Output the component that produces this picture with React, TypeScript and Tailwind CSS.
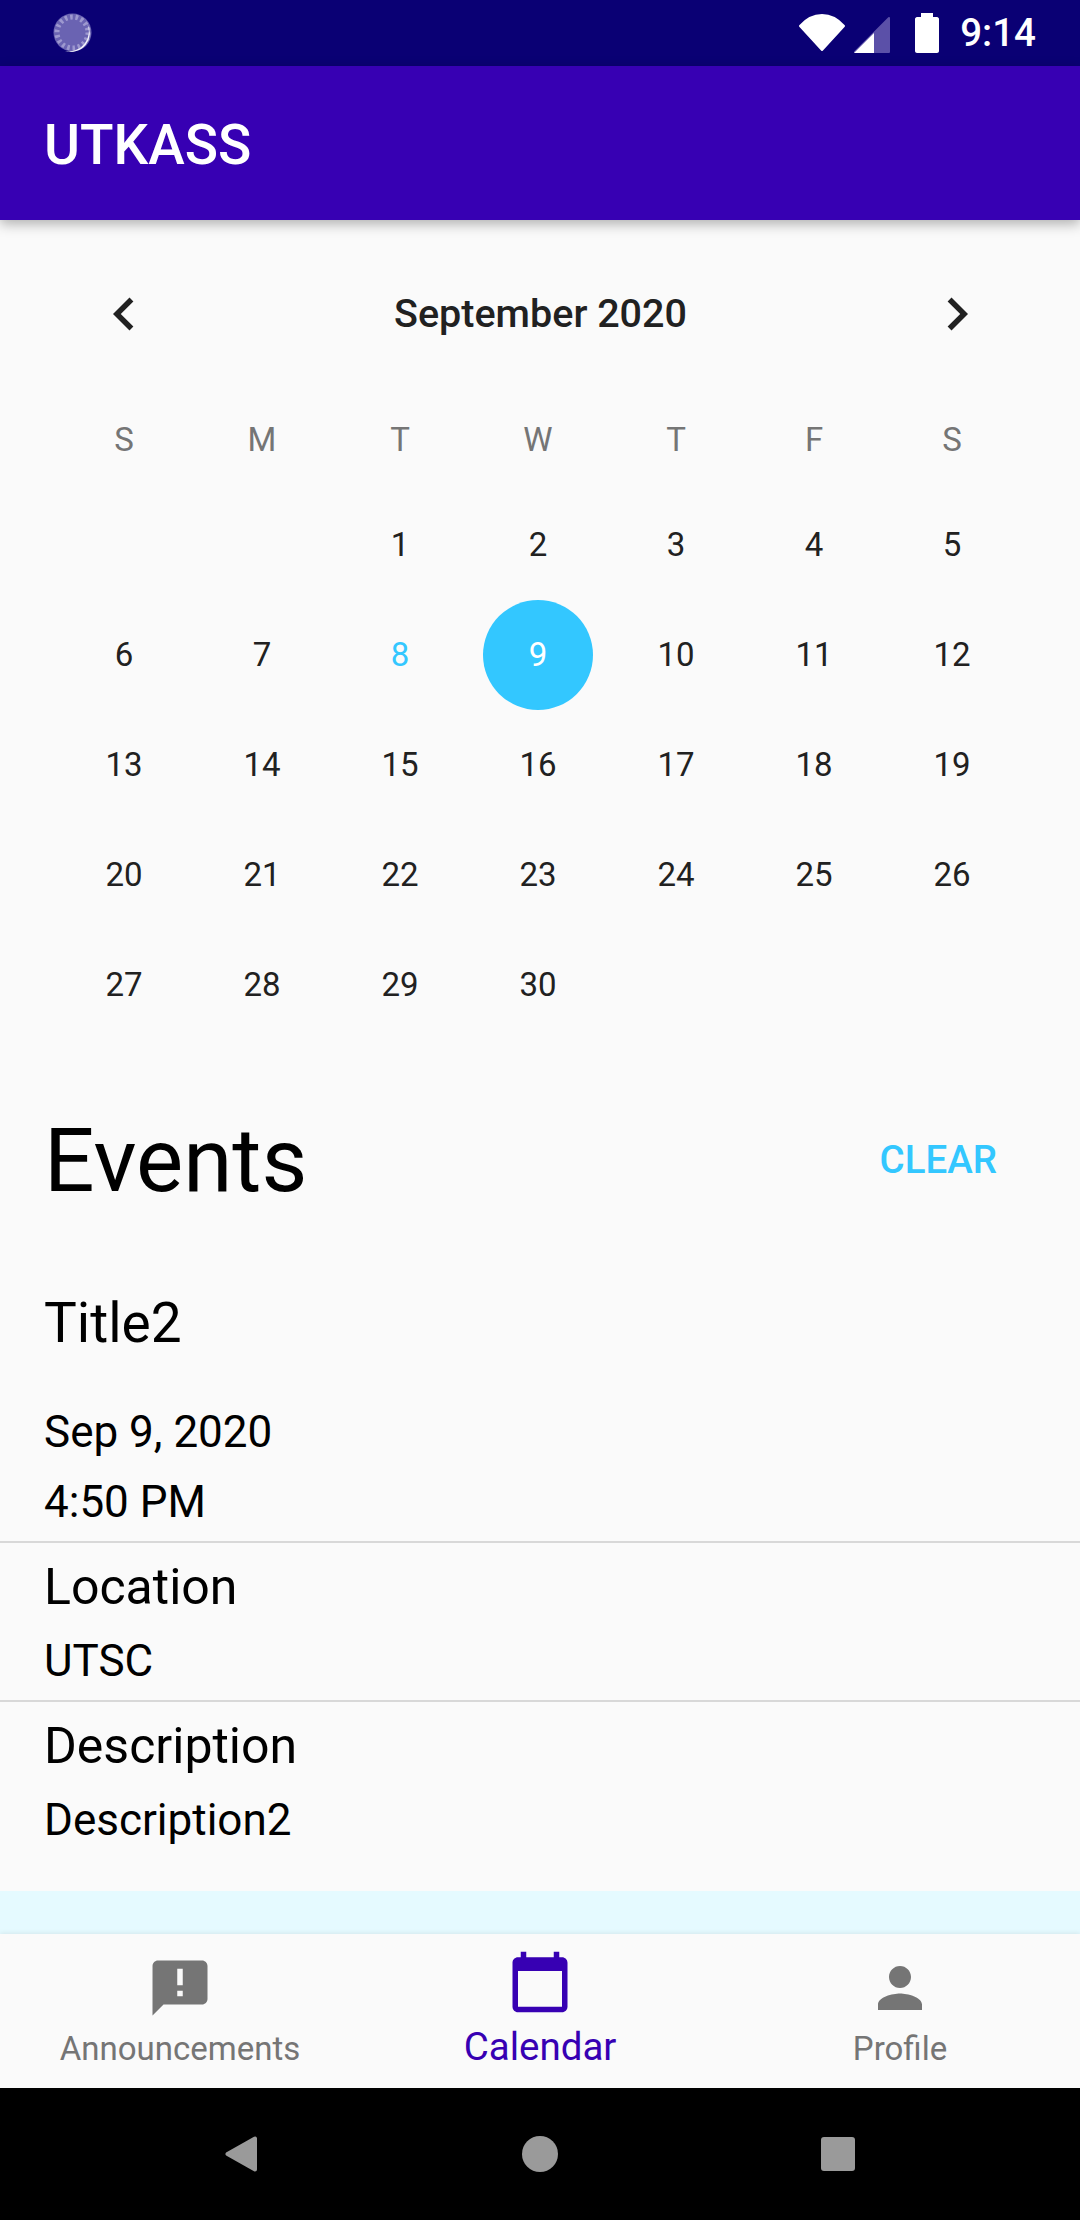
const purple = "#3700b3";

const weekdays = ["S", "M", "T", "W", "T", "F", "S"];
const days: (number | null)[] = [
  null, null, 1, 2, 3, 4, 5,
  6, 7, 8, 9, 10, 11, 12,
  13, 14, 15, 16, 17, 18, 19,
  20, 21, 22, 23, 24, 25, 26,
  27, 28, 29, 30, null, null, null,
];

function Icon({ d, className }: { d: string; className: string }) {
  return (
    <svg viewBox="0 0 24 24" className={className} fill="currentColor">
      <path d={d} />
    </svg>
  );
}

function StatusBar() {
  return (
    <div className="h-[66px] bg-[#0a0074] flex items-center pl-[53px] pr-[44px] text-white">
      <svg viewBox="0 0 40 40" className="w-[40px] h-[40px]">
        <circle cx="19.5" cy="19.5" r="19" fill="#6a63b2" />
        <circle cx="19.5" cy="19.5" r="15.5" fill="none" stroke="#9d98cf" strokeWidth="5" strokeDasharray="2.6 2.8" />
        <path d="M34 10 A20 20 0 0 1 12 38 A19 19 0 0 0 34 10 Z" fill="#f2f2fa" />
      </svg>
      <div className="flex-1" />
      <svg viewBox="0 0 48 38" className="w-[48px] h-[38px]" fill="white" stroke="white" strokeWidth="2" strokeLinejoin="round">
        <path d="M24 36 L2 12 C8 5 15 1 24 1 C33 1 40 5 46 12 Z" />
      </svg>
      <svg viewBox="0 0 38 38" className="w-[38px] h-[38px] ml-[7px] mt-[3px]" strokeLinejoin="round">
        <path d="M36 2 V36 H2 Z" fill="#5b50a8" stroke="#5b50a8" strokeWidth="2" />
        <path d="M21 17 V37 H1 Z" fill="#ffffff" />
      </svg>
      <svg viewBox="0 0 24 40" className="w-[24px] h-[40px] ml-[24px]" fill="currentColor">
        <path d="M6 0 H18 V4 H22 C23 4 24 5 24 6 V38 C24 39 23 40 22 40 H2 C1 40 0 39 0 38 V6 C0 5 1 4 2 4 H6 Z" />
      </svg>
      <span className="ml-[21px] text-[38.5px] leading-none font-medium">9:14</span>
    </div>
  );
}

function CalendarView() {
  return (
    <div className="pt-[38px] pl-[55px] pr-[59px]">
      <div className="h-[110px] flex items-center justify-between pl-[36px] pr-[31px] pt-[2px] text-[#212121]">
        <Icon className="w-[66px] h-[66px]" d="M15.41 7.41 14 6l-6 6 6 6 1.41-1.41L10.83 12z" />
        <span className="text-[39.5px] font-medium">September 2020</span>
        <Icon className="w-[66px] h-[66px]" d="M10 6 8.59 7.41 13.17 12l-4.58 4.59L10 18l6-6z" />
      </div>
      <div className="grid grid-cols-7 mt-[28px] h-[88px] items-center text-center text-[33px] text-[#757575]">
        {weekdays.map((day, i) => (
          <span key={i}>{day}</span>
        ))}
      </div>
      <div className="grid grid-cols-7 mt-[6px] auto-rows-[110px] text-[33px] text-[#212121]">
        {days.map((day, i) => (
          <div key={i} className="flex items-center justify-center">
            {day === 9 ? (
              <span className="w-[110px] h-[110px] rounded-full bg-[#33c7ff] text-white flex items-center justify-center">{day}</span>
            ) : (
              <span className={day === 8 ? "text-[#33c7ff]" : ""}>{day}</span>
            )}
          </div>
        ))}
      </div>
    </div>
  );
}

function EventDetails() {
  return (
    <div className="text-black">
      <div className="flex items-center justify-between h-[120px] mt-[60px] pl-[44px] pr-[83px]">
        <span className="text-[89px] leading-none">Events</span>
        <span className="text-[38.5px] font-medium text-[#33c7ff]">CLEAR</span>
      </div>
      <div className="pl-[44px] text-[44px]">
        <div className="text-[55px] leading-[60px] mt-[73px]">Title2</div>
        <div className="leading-[70px] mt-[44px]">Sep 9, 2020</div>
        <div className="leading-[70px]">4:50 PM</div>
      </div>
      <div className="h-[2px] bg-[#d8d8d8] mt-[4px]" />
      <div className="pl-[44px]">
        <div className="text-[50px] leading-[60px] mt-[14px]">Location</div>
        <div className="text-[44px] leading-[60px] mt-[14px]">UTSC</div>
      </div>
      <div className="h-[2px] bg-[#d8d8d8] mt-[9px]" />
      <div className="pl-[44px]">
        <div className="text-[50px] leading-[60px] mt-[14px]">Description</div>
        <div className="text-[44px] leading-[60px] mt-[14px]">Description2</div>
      </div>
    </div>
  );
}

function BottomTabs() {
  return (
    <div className="h-[154px] bg-[#fafafa] grid grid-cols-3 shadow-[0_-1px_5px_rgba(0,0,0,0.08)]">
      <div className="flex flex-col items-center pt-[21px] text-[#757575]">
        <Icon className="w-[66px] h-[66px]" d="M20 2H4c-1.1 0-1.99.9-1.99 2L2 22l4-4h14c1.1 0 2-.9 2-2V4c0-1.1-.9-2-2-2zm-7 9h-2V5h2v6zm0 4h-2v-2h2v2z" />
        <span className="text-[33px] leading-[40px] mt-[8px]">Announcements</span>
      </div>
      <div className="flex flex-col items-center pt-[15px] text-[#3700b3]">
        <Icon className="w-[66px] h-[66px]" d="M20 3h-1V1h-2v2H7V1H5v2H4c-1.1 0-2 .9-2 2v16c0 1.1.9 2 2 2h16c1.1 0 2-.9 2-2V5c0-1.1-.9-2-2-2zm0 18H4V8h16v13z" />
        <span className="text-[38.5px] leading-[44px] mt-[10px]">Calendar</span>
      </div>
      <div className="flex flex-col items-center pt-[21px] text-[#757575]">
        <Icon className="w-[66px] h-[66px]" d="M12 12c2.21 0 4-1.79 4-4s-1.79-4-4-4-4 1.79-4 4 1.79 4 4 4zm0 2c-2.67 0-8 1.34-8 4v2h16v-2c0-2.66-5.33-4-8-4z" />
        <span className="text-[33px] leading-[40px] mt-[8px]">Profile</span>
      </div>
    </div>
  );
}

function NavBar() {
  return (
    <div className="h-[132px] bg-black flex items-center justify-center text-[#9a9a9a]">
      <svg viewBox="0 0 32 36" className="w-[32px] h-[36px]" fill="currentColor" stroke="currentColor" strokeWidth="4" strokeLinejoin="round">
        <path d="M30 2.5 V33.5 L2.5 18 Z" />
      </svg>
      <div className="w-[36px] h-[36px] rounded-full bg-[#9a9a9a] ml-[265px]" />
      <div className="w-[34px] h-[34px] rounded-[3px] bg-[#9a9a9a] ml-[263px]" />
    </div>
  );
}

export default function App() {
  return (
    <div className="w-[1080px] h-[2220px] flex flex-col bg-[#fafafa] overflow-hidden font-['Roboto',sans-serif]">
      <StatusBar />
      <div className="h-[154px] flex items-center pl-[44px] pt-[4px] text-white text-[55px] font-medium relative z-10 shadow-[0_4px_12px_rgba(0,0,0,0.3)]" style={{ backgroundColor: purple }}>
        UTKASS
      </div>
      <div className="flex-1 overflow-hidden flex flex-col">
        <div className="flex-1">
          <CalendarView />
          <EventDetails />
        </div>
        <div className="h-[43px] bg-[#e5faff]" />
      </div>
      <BottomTabs />
      <NavBar />
    </div>
  );
}
